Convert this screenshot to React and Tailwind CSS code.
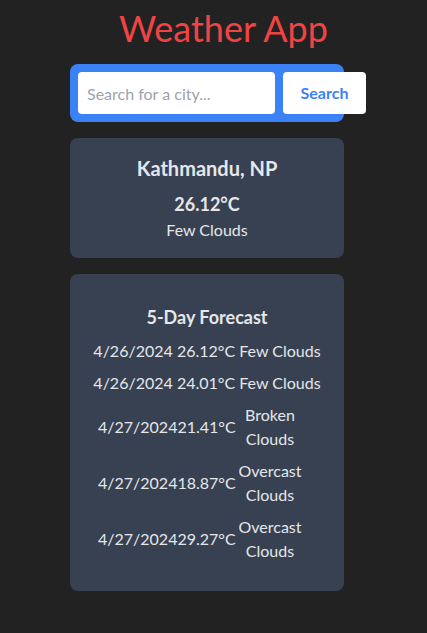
import React, { useState } from 'react';

const forecast = [
  { date: '4/26/2024', temp: '26.12°C', desc: 'Few Clouds', inline: true },
  { date: '4/26/2024', temp: '24.01°C', desc: 'Few Clouds', inline: true },
  { date: '4/27/2024', temp: '21.41°C', desc: 'Broken Clouds' },
  { date: '4/27/2024', temp: '18.87°C', desc: 'Overcast Clouds' },
  { date: '4/27/2024', temp: '29.27°C', desc: 'Overcast Clouds' },
];

const App = () => {
  const [city, setCity] = useState('');

  return (
    <div
      className="min-h-screen bg-[#222222] flex flex-col items-start pl-[70px] pb-10"
      style={{ fontFamily: '"Segoe UI", Lato, "Noto Sans", sans-serif' }}
    >
      {/* Header */}
      <h1 className="mt-2 ml-[49px] text-4xl leading-10 text-[#ef4444]">Weather App</h1>

      {/* Search */}
      <form
        onSubmit={(e) => e.preventDefault()}
        className="mt-4 w-[274px] flex gap-2 p-2 rounded-lg bg-[#3b82f6]"
      >
        <input
          type="text"
          value={city}
          onChange={(e) => setCity(e.target.value)}
          placeholder="Search for a city..."
          className="w-[197px] shrink-0 h-[42px] pl-[9px] pr-2 rounded bg-white text-base text-gray-700 placeholder:text-[#9ca3af] focus:outline-none"
        />
        <button
          type="submit"
          className="w-[83px] shrink-0 h-[42px] rounded bg-white text-base font-bold text-[#3b82f6]"
        >
          Search
        </button>
      </form>

      {/* Current weather */}
      <div className="mt-4 w-[274px] p-4 rounded-lg bg-[#374151] text-center text-[#e5e7eb]">
        <h2 className="text-xl leading-7 font-bold">Kathmandu, NP</h2>
        <p className="mt-2 text-lg leading-7 font-bold">26.12°C</p>
        <p className="text-base leading-6">Few Clouds</p>
      </div>

      {/* Forecast */}
      <div className="mt-4 w-[274px] pt-[29px] pb-[28px] px-4 rounded-lg bg-[#374151] text-center text-[#e5e7eb]">
        <h2 className="text-lg leading-7 font-bold">5-Day Forecast</h2>
        <div className="mt-2 space-y-2 text-base leading-6">
          {forecast.map((f, i) =>
            f.inline ? (
              <p key={i} className="whitespace-nowrap">
                {f.date} {f.temp} {f.desc}
              </p>
            ) : (
              <div key={i} className="flex items-center pl-3">
                <span className="w-[140px] text-left">
                  {f.date}
                  {f.temp}
                </span>
                <span className="w-[64px] text-center">{f.desc}</span>
              </div>
            )
          )}
        </div>
      </div>
    </div>
  );
};

export default App;
